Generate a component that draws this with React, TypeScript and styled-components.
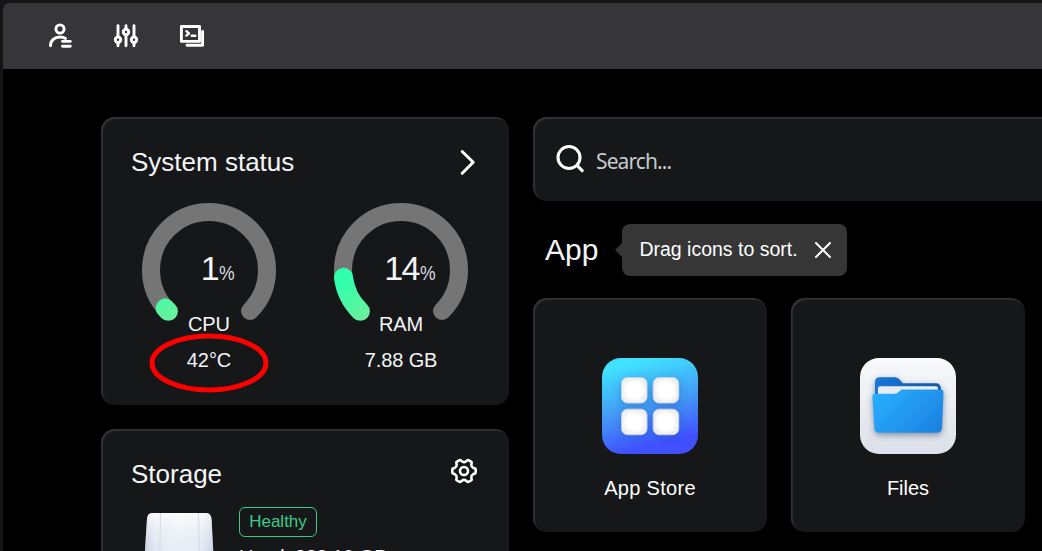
import React from "react";
import styled, { createGlobalStyle } from "styled-components";

const GlobalStyle = createGlobalStyle`
  * { box-sizing: border-box; }
  body {
    margin: 0;
    background: #151515;
    overflow: hidden;
    font-family: "Liberation Sans", Arial, sans-serif;
    color: #f4f4f6;
  }
`;

const Desktop = styled.div`
  height: 551px;
  padding: 3px 0 0 3px;
  overflow: hidden;
`;

const Screen = styled.div`
  height: 548px;
  background: #000;
  border-top-left-radius: 6px;
  overflow: hidden;
`;

const TopBar = styled.header`
  display: flex;
  align-items: center;
  gap: 38px;
  height: 66px;
  padding-left: 43px;
  background: #36363a;
`;

const BarIcon = styled.svg`
  display: block;
  width: 28px;
  height: 28px;
  fill: none;
  stroke: #fff;
  stroke-width: 2.9;
  stroke-linecap: round;
  stroke-linejoin: round;
`;

const Columns = styled.main`
  display: grid;
  grid-template-columns: 408px 750px;
  column-gap: 24px;
  padding: 48px 0 0 98px;
`;

const Column = styled.div`
  display: flex;
  flex-direction: column;
`;

const Panel = styled.section<{ $height: number }>`
  position: relative;
  height: ${(p) => p.$height}px;
  margin-bottom: 24px;
  padding: 0 31px 0 30px;
  border-radius: 14px;
  background: #161719;
  box-shadow: inset 1.5px 1.5px 2px rgba(255, 255, 255, 0.15);
`;

const PanelHead = styled.div<{ $height: number }>`
  display: flex;
  align-items: center;
  justify-content: space-between;
  height: ${(p) => p.$height}px;
`;

const Title = styled.h2<{ $size?: number }>`
  margin: 0;
  font-size: ${(p) => p.$size ?? 26}px;
  line-height: 30px;
  font-weight: 400;
  white-space: nowrap;
`;

const LineIcon = styled.svg<{ $w: number; $h: number; $stroke: number }>`
  display: block;
  flex: none;
  width: ${(p) => p.$w}px;
  height: ${(p) => p.$h}px;
  fill: none;
  stroke: #fff;
  stroke-width: ${(p) => p.$stroke};
  stroke-linecap: round;
  stroke-linejoin: round;
`;

const GearIcon = styled(LineIcon)`
  margin-bottom: 6px;
`;

const Gauges = styled.div`
  display: flex;
  gap: 56px;
  margin-top: -4px;
  padding: 0 10px;
`;

const GaugeBox = styled.div`
  display: grid;
  width: 136px;
  text-align: center;
  font-size: 20px;
  line-height: 24px;
  letter-spacing: -0.1px;
`;

const Dial = styled.svg`
  grid-area: 1 / 1;
  display: block;
  width: 136px;
  height: 120px;
  fill: none;
  stroke-linecap: round;
`;

const Value = styled.div`
  grid-area: 1 / 1;
  display: flex;
  align-items: baseline;
  justify-content: center;
  height: 40px;
  margin-top: 46px;
  padding-left: 18px;
  font-size: 34px;
  line-height: 40px;
  letter-spacing: -1.6px;
`;

const Percent = styled.span`
  display: inline-block;
  width: 17px;
  font-size: 20px;
  letter-spacing: 0;
  color: #dcdce4;
  transform: translateX(1px) scaleX(0.88);
  transform-origin: left;
`;

const GaugeName = styled.div`
  margin-top: -10px;
`;

const GaugeDetail = styled.div`
  margin-top: 12px;
`;

const Marker = styled.svg`
  position: absolute;
  left: 46px;
  top: 214px;
  width: 124px;
  height: 64px;
  fill: none;
  stroke: #fe0000;
  stroke-width: 5;
`;

const StorageBody = styled.div`
  display: flex;
  padding-left: 12px;
`;

const Drive = styled.svg`
  display: block;
  width: 74px;
  height: 60px;
  margin-top: -5px;
`;

const StorageInfo = styled.div`
  margin: -11px 0 0 22px;
  font-size: 20px;
  line-height: 24px;
  letter-spacing: -0.35px;
  white-space: nowrap;
`;

const Badge = styled.div`
  width: 78px;
  height: 30px;
  margin-bottom: 8px;
  border: 1px solid #3ccb88;
  border-radius: 6px;
  color: #3ccb88;
  font-size: 17px;
  line-height: 27px;
  letter-spacing: 0;
  text-align: center;
`;

const SearchPanel = styled(Panel)`
  display: flex;
  align-items: center;
  gap: 11px;
  margin-bottom: 23px;
  padding: 0 0 1px 23px;
`;

const SearchText = styled.span`
  font-family: "Noto Sans", "Open Sans", sans-serif;
  font-size: 21px;
  line-height: 28px;
  letter-spacing: -0.9px;
  color: #c5cbd0;
  padding-top: 4px;
`;

const AppHead = styled.div`
  display: flex;
  align-items: center;
  height: 52px;
  margin-bottom: 22px;
  padding-left: 12px;
`;

const Hint = styled.div`
  position: relative;
  display: flex;
  align-items: center;
  justify-content: space-between;
  width: 225px;
  height: 52px;
  margin-left: 24px;
  padding: 0 16px 0 17px;
  border-radius: 8px;
  background: #363636;
  color: #fff;
  font-size: 19.5px;
  white-space: nowrap;

  &::before {
    content: "";
    position: absolute;
    left: -7px;
    top: 19px;
    border: 7px solid transparent;
    border-left-width: 0;
    border-right-color: #363636;
  }
`;

const HintText = styled.span`
  margin-top: -1px;
`;

const AppGrid = styled.div`
  display: flex;
  gap: 24px;
`;

const AppCard = styled(Panel)`
  display: flex;
  flex-direction: column;
  align-items: center;
  width: 234px;
  padding: 60px 0 0;
`;

const AppIcon = styled.svg`
  display: block;
  width: 96px;
  height: 96px;
`;

const AppName = styled.div<{ $spacing?: number }>`
  margin-top: 22px;
  font-size: 20px;
  line-height: 24px;
  letter-spacing: ${(p) => p.$spacing ?? 0}px;
  color: #fff;
`;

const RADIUS = 58;

function point(deg: number) {
  const a = (deg * Math.PI) / 180;
  return `${(68 + RADIUS * Math.cos(a)).toFixed(2)} ${(68 + RADIUS * Math.sin(a)).toFixed(2)}`;
}

function arc(from: number, to: number) {
  return `M${point(from)}A${RADIUS} ${RADIUS} 0 ${to - from > 180 ? 1 : 0} 1 ${point(to)}`;
}

// Six-toothed gear outline around (14, 14), one tooth every 60 degrees.
function gearOutline() {
  const at = (r: number, deg: number) => {
    const a = (deg * Math.PI) / 180;
    return `${(14 + r * Math.cos(a)).toFixed(2)} ${(14 + r * Math.sin(a)).toFixed(2)}`;
  };
  let d = "";
  for (let i = 0; i < 6; i++) {
    const c = i * 60;
    d += `${i ? "L" : "M"}${at(9.6, c - 20)}L${at(11.7, c - 11)}Q${at(12.1, c)} ${at(11.7, c + 11)}L${at(9.6, c + 20)}Q${at(8.4, c + 30)} ${at(9.6, c + 40)}`;
  }
  return d + "Z";
}

type GaugeProps = { id: string; value: number; sweep: number; name: string; detail: string };

function Gauge({ id, value, sweep, name, detail }: GaugeProps) {
  return (
    <GaugeBox>
      <Dial viewBox="0 0 136 120">
        <defs>
          <linearGradient id={id} gradientUnits="userSpaceOnUse" x1="10" y1="80" x2="38" y2="114">
            <stop offset="0" stopColor="#30ffac" />
            <stop offset="1" stopColor="#6df09a" />
          </linearGradient>
        </defs>
        <path d={arc(135, 405)} stroke="#757575" strokeWidth="18" />
        <path d={arc(134.5, 134.5 + sweep)} stroke={`url(#${id})`} strokeWidth="19" />
      </Dial>
      <Value>
        {value}
        <Percent>%</Percent>
      </Value>
      <GaugeName>{name}</GaugeName>
      <GaugeDetail>{detail}</GaugeDetail>
    </GaugeBox>
  );
}

export default function App() {
  return (
    <>
      <GlobalStyle />
      <Desktop>
        <Screen>
          <TopBar>
            <BarIcon viewBox="46 22 28 28">
              <circle cx="60" cy="29" r="4.1" />
              <path d="M50.5 45.7C50.5 40.5 54.5 37 60 37Q63.5 37 65.5 38.5M62.5 41.4H70.3M62.5 46.2H70.3" />
            </BarIcon>
            <BarIcon viewBox="112 22 28 28">
              <path d="M118 25.7V36.5M118 43V45.8M126 25.7V28.5M126 35.5V45.8M134 25.7V36.5M134 43V45.8" />
              <circle cx="118" cy="39.7" r="2.7" />
              <circle cx="126" cy="32" r="2.7" />
              <circle cx="134" cy="39.7" r="2.7" />
            </BarIcon>
            <BarIcon viewBox="178 22 28 28">
              <path d="M181.4 26.5H199.5V41.4H181.4ZM202.6 31.5V45.2H187" />
              <path d="M186.4 31.2L189 33.4L186.4 35.6M191.7 35.8H195.3" strokeWidth="2.4" />
            </BarIcon>
          </TopBar>
          <Columns>
            <Column>
              <Panel $height={288}>
                <PanelHead $height={89}>
                  <Title>System status</Title>
                  <LineIcon $w={20} $h={28} $stroke={3} viewBox="458 148 20 28">
                    <path d="M462.2 151.5L473.2 162.3L462.2 173.2" />
                  </LineIcon>
                </PanelHead>
                <Gauges>
                  <Gauge id="cpuGreen" value={1} sweep={4.5} name="CPU" detail="42°C" />
                  <Gauge id="ramGreen" value={14} sweep={38.2} name="RAM" detail="7.88 GB" />
                </Gauges>
                <Marker viewBox="0 0 124 64">
                  <ellipse cx="62" cy="32" rx="57" ry="27" />
                </Marker>
              </Panel>
              <Panel $height={288}>
                <PanelHead $height={89}>
                  <Title>Storage</Title>
                  <GearIcon $w={28} $h={28} $stroke={2.6} viewBox="0 0 28 28">
                    <path d={gearOutline()} />
                    <circle cx="14" cy="14" r="4" />
                  </GearIcon>
                </PanelHead>
                <StorageBody>
                  <Drive viewBox="0 0 74 60">
                    <defs>
                      <linearGradient id="driveSide">
                        <stop offset="0" stopColor="#b9c4d4" />
                        <stop offset="0.16" stopColor="#e2e7f0" />
                        <stop offset="0.5" stopColor="#f0f3f8" />
                        <stop offset="0.82" stopColor="#e5eaf2" />
                        <stop offset="1" stopColor="#bac6d7" />
                      </linearGradient>
                      <linearGradient id="driveTop" x2="0" y2="1">
                        <stop offset="0" stopColor="#fff" stopOpacity="0.75" />
                        <stop offset="0.7" stopColor="#dae4f2" stopOpacity="0.3" />
                      </linearGradient>
                    </defs>
                    <path d="M9 0H63Q68 0 68.5 6L71.5 60H0.5L4 6Q4.5 0 9 0Z" fill="url(#driveSide)" />
                    <path d="M9 0H63Q68 0 68.5 6L71.5 60H0.5L4 6Q4.5 0 9 0Z" fill="url(#driveTop)" />
                    <path d="M17.5 0L16.5 60M55.5 0L57 60" stroke="#cbd4e1" strokeWidth="0.8" />
                  </Drive>
                  <StorageInfo>
                    <Badge>Healthy</Badge>
                    Used: 328.10 GB
                  </StorageInfo>
                </StorageBody>
              </Panel>
            </Column>
            <Column>
              <SearchPanel $height={84}>
                <LineIcon $w={29} $h={29} $stroke={3.1} viewBox="0 0 29 29">
                  <circle cx="13" cy="13.5" r="11" />
                  <path d="M21.3 21.7L26.2 26.7" />
                </LineIcon>
                <SearchText>Search...</SearchText>
              </SearchPanel>
              <AppHead>
                <Title $size={30}>App</Title>
                <Hint>
                  <HintText>Drag icons to sort.</HintText>
                  <LineIcon $w={16} $h={16} $stroke={2} viewBox="0 0 16 16">
                    <path d="M1 1L15 15M15 1L1 15" />
                  </LineIcon>
                </Hint>
              </AppHead>
              <AppGrid>
                <AppCard $height={234}>
                  <AppIcon viewBox="0 0 96 96">
                    <defs>
                      <linearGradient id="store" x1="0.35" y1="0.05" x2="0.6" y2="1">
                        <stop offset="0" stopColor="#40e0ff" />
                        <stop offset="0.5" stopColor="#4497f5" />
                        <stop offset="0.9" stopColor="#4050ff" />
                      </linearGradient>
                      <radialGradient id="tile">
                        <stop offset="0.6" stopColor="#fff" />
                        <stop offset="1" stopColor="#eeeef1" />
                      </radialGradient>
                      <filter id="tileShadow" x="-30%" y="-30%" width="160%" height="160%">
                        <feDropShadow dx="0" dy="2" stdDeviation="4" floodColor="#204a9c" floodOpacity="0.35" />
                      </filter>
                    </defs>
                    <rect width="96" height="96" rx="19" fill="url(#store)" />
                    <g fill="url(#tile)" stroke="#cbd6e8" strokeWidth="0.8" filter="url(#tileShadow)">
                      <rect x="19.5" y="19.5" width="25.5" height="25.5" rx="6" />
                      <rect x="51.2" y="19.5" width="25.5" height="25.5" rx="6" />
                      <rect x="19.5" y="51.2" width="25.5" height="25.5" rx="6" />
                      <rect x="51.2" y="51.2" width="25.5" height="25.5" rx="6" />
                    </g>
                  </AppIcon>
                  <AppName $spacing={0.3}>App Store</AppName>
                </AppCard>
                <AppCard $height={234}>
                  <AppIcon viewBox="0 0 96 96">
                    <defs>
                      <linearGradient id="filesBg" x2="0" y2="1">
                        <stop offset="0" stopColor="#f7f9fb" />
                        <stop offset="1" stopColor="#dce1e9" />
                      </linearGradient>
                      <linearGradient id="folder" x1="0" y1="0.2" x2="1" y2="0.8">
                        <stop offset="0" stopColor="#29aefd" />
                        <stop offset="1" stopColor="#1c83e2" />
                      </linearGradient>
                      <linearGradient id="folderBack">
                        <stop offset="0" stopColor="#1976d8" />
                        <stop offset="1" stopColor="#1257a8" />
                      </linearGradient>
                      <filter id="folderShadow" x="-20%" y="-20%" width="140%" height="150%">
                        <feDropShadow dx="0" dy="2.5" stdDeviation="3" floodColor="#53657f" floodOpacity="0.65" />
                      </filter>
                    </defs>
                    <rect width="96" height="96" rx="19" fill="url(#filesBg)" />
                    <g filter="url(#folderShadow)">
                      <path d="M15 40V24Q15 19.3 20 19.3H35Q38 19.3 40 22L43 25.3H76Q80.5 25.3 81 31V40Z" fill="url(#folderBack)" />
                      <path d="M18 40V30.5Q18 28.3 20.3 28.3H76Q78 28.3 78 30.5V40Z" fill="#e9edf2" />
                      <path d="M12.4 39Q12.2 35.8 15 35.8H35Q37 35.8 38.5 34L41.5 31.5H80.5Q83.7 31.5 83.5 35L82 70Q81.7 74.8 77 74.8H19Q14.6 74.8 14.3 70Z" fill="url(#folder)" />
                    </g>
                  </AppIcon>
                  <AppName>Files</AppName>
                </AppCard>
                <AppCard $height={234} />
              </AppGrid>
            </Column>
          </Columns>
        </Screen>
      </Desktop>
    </>
  );
}
